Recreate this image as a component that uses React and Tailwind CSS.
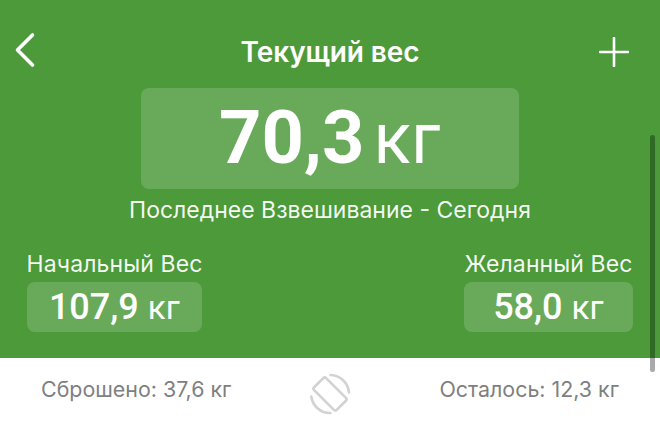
const StatChip = ({ label, value, width }) => {
  return (
    <div className={`flex flex-col items-center ${width}`}>
      <span className="text-center text-[23px] leading-[26px] tracking-[0.1px] whitespace-nowrap text-white/95">{label}</span>
      <div className="mt-[5px] w-full h-[50px] rounded-lg bg-[#68aa59] flex items-baseline justify-center pt-[6px] text-white">
        <span className="font-['Roboto',sans-serif] text-[36px] leading-[38px] font-medium">{value}</span>
        <span className="ml-[9px] text-[33px] leading-[38px]">кг</span>
      </div>
    </div>
  );
};

const RotateIcon = () => (
  <svg width="44" height="44" viewBox="0 0 44 44" fill="none" stroke="#d2d2d2" strokeWidth="2.600" strokeLinecap="round" strokeLinejoin="round">
    <rect x="13.500" y="6" width="17" height="32" rx="2" transform="rotate(-45 22 22)" />
    <path d="M22.500 3 A19 19 0 0 1 41 20.500" />
    <path d="M3.300 24.500 A19 19 0 0 0 22.500 41" />
  </svg>
);

const App = () => {
  return (
    <div className="relative w-[660px] h-[428px] overflow-hidden bg-white font-['Inter','Noto_Sans',sans-serif]">
      <div className="h-[358px] bg-[#4d9a3a] flex flex-col">
        <div className="h-[88px] px-[14px] pt-[32px] grid grid-cols-[1fr_auto_1fr] items-start text-white">
          <svg width="22" height="36" viewBox="0 0 22 36" fill="none" stroke="white" strokeWidth="3.600" strokeLinecap="round" strokeLinejoin="round">
            <path d="M18.500 3 L3.500 18 L18.500 33" />
          </svg>
          <h1 className="text-[28px] leading-[40px] font-semibold tracking-[-0.1px]">Текущий вес</h1>
          <svg className="justify-self-end mt-[5px] mr-[17px]" width="30" height="30" viewBox="0 0 30 30" fill="none" stroke="white" strokeWidth="2.600" strokeLinecap="round">
            <path d="M15 1 V29 M1 15 H29" />
          </svg>
        </div>

        <div className="mx-auto w-[378px] h-[101px] rounded-lg bg-[#68aa59] flex items-baseline justify-center pt-[7px] text-white">
          <span className="font-['Roboto',sans-serif] text-[74px] leading-[86px] font-bold">70,3</span>
          <span className="ml-[9px] text-[69px] leading-[86px]">кг</span>
        </div>

        <p className="mt-[8px] text-center text-[23px] leading-[26px] text-white/95">Последнее Взвешивание - Сегодня</p>

        <div className="mt-[28px] px-[27px] flex justify-between">
          <StatChip label="Начальный Вес" value="107,9" width="w-[175px]" />
          <StatChip label="Желанный Вес" value="58,0" width="w-[169px]" />
        </div>
      </div>

      <div className="h-[70px] pl-[41px] pr-[41px] grid grid-cols-[1fr_auto_1fr] items-start text-[21.400px] text-[#7f7f7f]">
        <span className="mt-[18px] leading-[26px]">Сброшено: 37,6 кг</span>
        <div className="mt-[14px]"><RotateIcon /></div>
        <span className="mt-[18px] leading-[26px] text-right">Осталось: 12,3 кг</span>
      </div>

      <div className="absolute left-[650px] top-[135px] w-[5px] h-[223px] rounded-t-full bg-[#2f6a24]" />
      <div className="absolute left-[650px] top-[358px] w-[5px] h-[14px] rounded-b-full bg-[#a9a9a9]" />
    </div>
  );
};

export default App;
